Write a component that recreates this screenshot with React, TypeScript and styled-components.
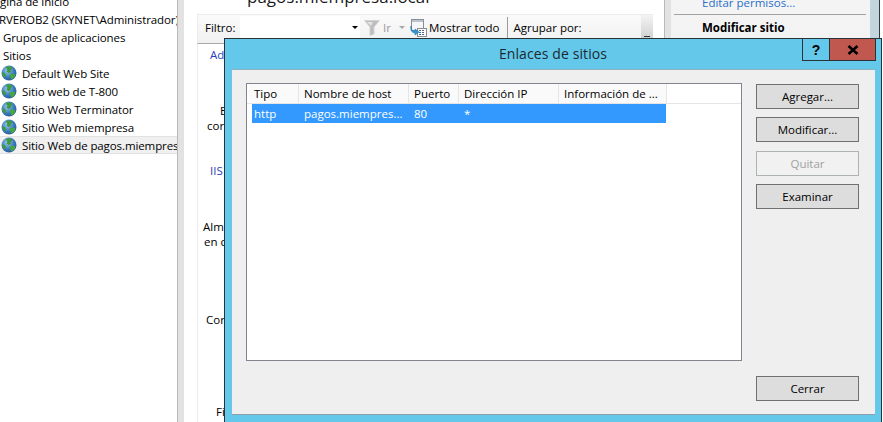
import styled, { createGlobalStyle } from "styled-components";

const GlobalStyle = createGlobalStyle`
  html, body {
    margin: 0;
    padding: 0;
    background: #fff;
  }
  body {
    font-family: "Open Sans", "Noto Sans", sans-serif;
    font-size: 11.5px;
    color: #000;
  }
`;

const Screen = styled.div`
  position: relative;
  display: flex;
  width: 883px;
  height: 422px;
  overflow: hidden;
  background: #fff;
`;

const TreePanel = styled.div`
  width: 177px;
  flex: none;
  overflow: hidden;
`;

const TreeList = styled.div`
  margin-top: -8px;
  letter-spacing: -0.1px;
`;

const TreeRow = styled.div<{ $indent: number; $selected?: boolean }>`
  display: flex;
  align-items: center;
  gap: 5px;
  height: 18px;
  box-sizing: border-box;
  margin-left: ${({ $indent }) => $indent}px;
  white-space: nowrap;
  ${({ $selected }) =>
    $selected &&
    `
    padding-left: 1px;
    background: #f0f0f0;
    border-top: 1px solid #e2e2e2;
    border-bottom: 1px solid #e2e2e2;
  `}
`;

const Splitter = styled.div`
  width: 7px;
  flex: none;
  background: #e2e2e2;
  border-left: 1px solid #b9b9b9;
  box-sizing: border-box;
`;

const MiddlePane = styled.div`
  width: 480px;
  flex: none;
  display: flex;
  flex-direction: column;
  overflow: hidden;
`;

const PageTitle = styled.div`
  height: 10px;
  margin-bottom: 4px;
  padding-left: 63px;
  overflow: hidden;
  display: flex;
  align-items: flex-end;
  font-size: 17px;
  line-height: 26px;
  color: #1a1a1a;
  white-space: nowrap;
  flex: none;
`;

const Toolbar = styled.div`
  display: flex;
  align-items: center;
  width: 456px;
  height: 30px;
  margin-left: 13px;
  flex: none;
  box-sizing: border-box;
  padding-left: 7px;
  padding-bottom: 3px;
  border-top: 1px solid #ececec;
  border-left: 1px solid #ececec;
  border-bottom: 1px solid #a8a8a8;
  background: linear-gradient(#fafafa, #f1f1f1);
`;

const FilterLabel = styled.span`
  width: 35px;
  flex: none;
`;

const FilterInput = styled.div`
  width: 120px;
  height: 23px;
  flex: none;
  margin-right: 4px;
  background: #fff;
  display: flex;
  align-items: center;
  justify-content: flex-end;
  padding-right: 2px;
  box-sizing: border-box;
`;

const Caret = styled.span<{ $color: string }>`
  width: 0;
  height: 0;
  flex: none;
  border-left: 3px solid transparent;
  border-right: 3px solid transparent;
  border-top: 3px solid ${({ $color }) => $color};
`;

const GoLabel = styled.span`
  color: #9a9a9a;
  margin: 0 8px 0 3px;
`;

const ToolbarText = styled.span`
  margin-left: 2px;
  white-space: nowrap;
`;

const ToolbarDivider = styled.span`
  width: 1px;
  height: 21px;
  background: #9a9a9a;
  margin: 0 4px 0 7px;
  flex: none;
`;

const ToolbarGrip = styled.div`
  margin-left: auto;
  width: 12px;
  height: 28px;
  margin-bottom: -3px;
  flex: none;
  background: linear-gradient(#f4f4f4, #c9c9c9);
  display: flex;
  align-items: flex-end;
  justify-content: center;
  padding-bottom: 2px;
  box-sizing: border-box;
`;

const GripLines = styled.span`
  width: 6px;
  height: 3px;
  border-top: 1px solid #333;
  border-bottom: 1px solid #333;
`;

const FeatureColumn = styled.div`
  flex: 1;
  width: 100px;
  margin-left: 13px;
  border-left: 1px solid #ececec;
`;

const FeatureText = styled.div<{ $left: number; $top: number; $link?: boolean }>`
  margin-left: ${({ $left }) => $left}px;
  margin-top: ${({ $top }) => $top}px;
  line-height: 15px;
  height: 15px;
  white-space: nowrap;
  color: ${({ $link }) => ($link ? "#2a3fb8" : "#000")};
`;

const ActionsPane = styled.div`
  width: 199px;
  flex: none;
  box-sizing: border-box;
  background: linear-gradient(#f4f4f4, #e6e6e6);
  border-right: 1px solid #f4f4f4;
  overflow: hidden;
`;

const ActionLink = styled.div`
  margin: -4px 0 0 31px;
  height: 14px;
  line-height: 14px;
  color: #2a6fc9;
`;

const ActionRule = styled.div`
  height: 1px;
  margin: 4px 3px 0 3px;
  background: #a2a2a2;
`;

const ActionHeading = styled.div`
  margin: 5px 0 0 31px;
  font-weight: 700;
  line-height: 15px;
`;

const WindowEdge = styled.div`
  width: 9px;
  flex: none;
  background: #c3d6de;
  border-right: 1px solid #2f3a40;
`;

const Dialog = styled.div`
  position: absolute;
  left: 224px;
  top: 38px;
  width: 658px;
  height: 384px;
  box-sizing: border-box;
  background: #63c8ea;
  border: 1px solid #2c3338;
  border-bottom: none;
  display: flex;
  flex-direction: column;
`;

const TitleBar = styled.div`
  display: grid;
  grid-template-columns: 1fr auto 1fr;
  height: 30px;
  flex: none;
`;

const DialogTitle = styled.div`
  grid-column: 2;
  font-size: 14px;
  letter-spacing: 0.1px;
  line-height: 30px;
  color: #1c2a30;
`;

const WindowButtons = styled.div`
  grid-column: 3;
  justify-self: end;
  display: flex;
  height: 22px;
  margin-right: 5px;
`;

const HelpButton = styled.div`
  width: 27px;
  box-sizing: border-box;
  display: flex;
  align-items: center;
  justify-content: center;
  border-left: 1px solid #2c3338;
  border-bottom: 1px solid #2c3338;
  font-family: "Liberation Sans", sans-serif;
  font-weight: 700;
  font-size: 14px;
  color: #000;
`;

const CloseButton = styled.div`
  width: 47px;
  box-sizing: border-box;
  display: flex;
  align-items: center;
  justify-content: center;
  background: #c0584f;
  border: 1px solid #2c3338;
  border-top: none;
`;

const DialogBody = styled.div`
  margin: 0 6px 0 7px;
  height: 346px;
  flex: none;
  box-sizing: border-box;
  background: #efefef;
  border-top: 1px solid #8fb0c0;
  border-bottom: 1px solid #8fa0ab;
  padding: 13px 15px 13px 14px;
  display: flex;
  gap: 14px;
`;

const BindingsList = styled.div`
  width: 496px;
  height: 278px;
  flex: none;
  box-sizing: border-box;
  background: #fff;
  border: 1px solid #82848f;
  overflow: hidden;
`;

const HeaderRow = styled.div`
  display: flex;
  height: 20px;
  padding-left: 2px;
  box-sizing: border-box;
  border-bottom: 1px solid #e5e5e5;
`;

const HeaderCell = styled.div<{ $width: number }>`
  width: ${({ $width }) => $width}px;
  flex: none;
  box-sizing: border-box;
  padding-left: 5px;
  line-height: 19px;
  background: #fafafa;
  border-right: 1px solid #e5e5e5;
  white-space: nowrap;
`;

const BindingRow = styled.div`
  display: flex;
  height: 19px;
  margin-left: 5px;
  width: 414px;
  background: #3399ff;
  color: #fff;
`;

const BindingCell = styled.div<{ $width: number }>`
  width: ${({ $width }) => $width}px;
  flex: none;
  box-sizing: border-box;
  padding-left: 2px;
  line-height: 19px;
  white-space: nowrap;
`;

const ButtonColumn = styled.div`
  width: 103px;
  flex: none;
  display: flex;
  flex-direction: column;
  gap: 8px;
  padding-top: 1px;
`;

const DialogButton = styled.button<{ $pushDown?: number; $bottom?: boolean }>`
  width: 103px;
  height: 25px;
  flex: none;
  padding: 0;
  margin-top: ${({ $pushDown, $bottom }) => ($bottom ? "auto" : `${$pushDown ?? 0}px`)};
  font: inherit;
  color: #000;
  background: #dddddd;
  border: 1px solid #707070;
  &:disabled {
    color: #a0a0a0;
    background: #f1f1f1;
    border-color: #adb2b5;
  }
`;

const IconBox = styled.svg<{ $marginLeft?: number }>`
  flex: none;
  margin-left: ${({ $marginLeft }) => $marginLeft ?? 0}px;
`;

const Globe = () => (
  <IconBox width="16" height="16" viewBox="0 0 16 16">
    <defs>
      <radialGradient id="globeSea" cx="40%" cy="35%" r="70%">
        <stop offset="0" stopColor="#9ccbec" />
        <stop offset="0.6" stopColor="#3a7cc0" />
        <stop offset="1" stopColor="#2a5596" />
      </radialGradient>
    </defs>
    <circle cx="8" cy="8" r="7.5" fill="url(#globeSea)" />
    <path
      d="M6 1.5 10 1.5 11.5 3.5 9.5 5 10 7 7.5 8 5.5 6.5 6.5 4.5 5 3Z"
      fill="#3f9a3c"
    />
    <path d="M8.5 9.5 12 8.5 14.5 9.5 13 13 10.5 14.5 9.5 12.5Z" fill="#46a83f" />
    <path d="M1.5 7 4 8 5 11 3.5 12.5 1.5 10Z" fill="#3f9a3c" />
  </IconBox>
);

const Funnel = () => (
  <IconBox width="16" height="17" viewBox="0 0 16 17">
    <path d="M0.5 1.5H15.5L10 8V15L6 16.5V8Z" fill="#bdbdbd" stroke="#d4d4d4" />
    <path d="M3 3H9L7 7Z" fill="#e4e4e4" />
  </IconBox>
);

const ShowAllIcon = () => (
  <IconBox width="17" height="18" viewBox="0 0 17 18" $marginLeft={5}>
    <rect x="1.5" y="0.5" width="12" height="11" fill="#f4f6f8" stroke="#8a8f96" />
    <rect x="2" y="1" width="11" height="2" fill="#b9c4cf" />
    <rect x="7.5" y="9.5" width="9" height="8" fill="#fff" stroke="#8a8f96" />
    <path
      d="M9 11h2v1H9zM12 11h2v1h-2zM9 13h2v1H9zM12 13h2v1h-2zM9 15h2v1H9zM12 15h2v1h-2z"
      fill="#4a6d8c"
    />
    <path
      d="M1 7 C1 11 3 12 5 12 V10 L9 13 5 16 V14 C2 14 0 11 1 7Z"
      fill="#2f9ad6"
      stroke="#1f6fa8"
      strokeWidth="0.5"
    />
  </IconBox>
);

const CloseGlyph = () => (
  <svg width="12" height="10" viewBox="0 0 12 10">
    <path d="M1.5 1 10.5 9M10.5 1 1.5 9" stroke="#000" strokeWidth="2.6" />
  </svg>
);

const sites = [
  "Default Web Site",
  "Sitio web de T-800",
  "Sitio Web Terminator",
  "Sitio Web miempresa",
];

const columns = [
  { title: "Tipo", width: 50 },
  { title: "Nombre de host", width: 110 },
  { title: "Puerto", width: 50 },
  { title: "Dirección IP", width: 100 },
  { title: "Información de ...", width: 108 },
];

const bindingCells = [
  { text: "http", width: 50 },
  { text: "pagos.miempres...", width: 110 },
  { text: "80", width: 50 },
  { text: "*", width: 100 },
];

export default function App() {
  return (
    <Screen>
      <GlobalStyle />
      <TreePanel>
        <TreeList>
          <TreeRow $indent={-13}>Página de inicio</TreeRow>
          <TreeRow $indent={-1}>RVEROB2 (SKYNET\Administrador)</TreeRow>
          <TreeRow $indent={3}>Grupos de aplicaciones</TreeRow>
          <TreeRow $indent={3}>Sitios</TreeRow>
          {sites.map(site => (
            <TreeRow key={site} $indent={1}>
              <Globe />
              {site}
            </TreeRow>
          ))}
          <TreeRow $indent={0} $selected>
            <Globe />
            Sitio Web de pagos.miempresa.local
          </TreeRow>
        </TreeList>
      </TreePanel>
      <Splitter />
      <MiddlePane>
        <PageTitle>pagos.miempresa.local</PageTitle>
        <Toolbar>
          <FilterLabel>Filtro:</FilterLabel>
          <FilterInput>
            <Caret $color="#000" />
          </FilterInput>
          <Funnel />
          <GoLabel>Ir</GoLabel>
          <Caret $color="#a8a8a8" />
          <ShowAllIcon />
          <ToolbarText>Mostrar todo</ToolbarText>
          <ToolbarDivider />
          <ToolbarText>Agrupar por:</ToolbarText>
          <ToolbarGrip>
            <GripLines />
          </ToolbarGrip>
        </Toolbar>
        <FeatureColumn>
          <FeatureText $left={12} $top={3} $link>Ad</FeatureText>
          <FeatureText $left={22} $top={41}>E</FeatureText>
          <FeatureText $left={9} $top={0}>cor</FeatureText>
          <FeatureText $left={12} $top={30} $link>IIS</FeatureText>
          <FeatureText $left={5} $top={41}>Alm</FeatureText>
          <FeatureText $left={6} $top={0}>en c</FeatureText>
          <FeatureText $left={8} $top={63}>Cor</FeatureText>
          <FeatureText $left={18} $top={77}>Fi</FeatureText>
        </FeatureColumn>
      </MiddlePane>
      <Splitter />
      <ActionsPane>
        <ActionLink>Editar permisos...</ActionLink>
        <ActionRule />
        <ActionHeading>Modificar sitio</ActionHeading>
      </ActionsPane>
      <WindowEdge />

      <Dialog>
        <TitleBar>
          <DialogTitle>Enlaces de sitios</DialogTitle>
          <WindowButtons>
            <HelpButton>?</HelpButton>
            <CloseButton>
              <CloseGlyph />
            </CloseButton>
          </WindowButtons>
        </TitleBar>
        <DialogBody>
          <BindingsList>
            <HeaderRow>
              {columns.map(column => (
                <HeaderCell key={column.title} $width={column.width}>
                  {column.title}
                </HeaderCell>
              ))}
            </HeaderRow>
            <BindingRow>
              {bindingCells.map(cell => (
                <BindingCell key={cell.text} $width={cell.width}>
                  {cell.text}
                </BindingCell>
              ))}
            </BindingRow>
          </BindingsList>
          <ButtonColumn>
            <DialogButton>Agregar...</DialogButton>
            <DialogButton>Modificar...</DialogButton>
            <DialogButton disabled $pushDown={1}>Quitar</DialogButton>
            <DialogButton>Examinar</DialogButton>
            <DialogButton $bottom>Cerrar</DialogButton>
          </ButtonColumn>
        </DialogBody>
      </Dialog>
    </Screen>
  );
}
